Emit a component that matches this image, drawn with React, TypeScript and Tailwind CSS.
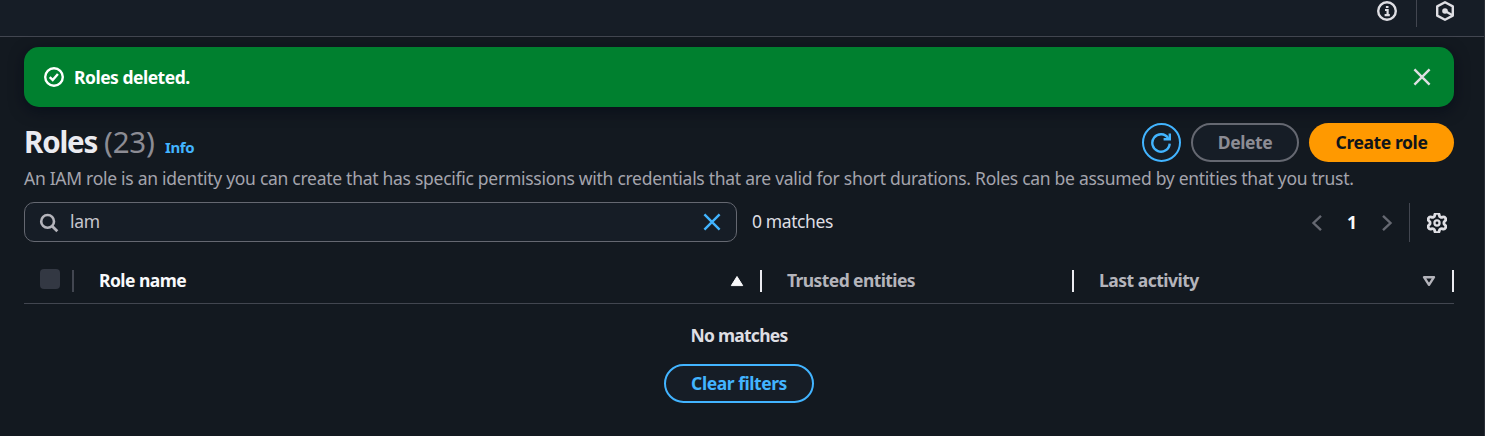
import React from "react";

type IconProps = { children: React.ReactNode; className?: string };

function Icon({ children, className = "" }: IconProps) {
  return (
    <svg viewBox="0 0 20 20" fill="none" stroke="currentColor" strokeWidth="2.4" className={`block h-5 w-5 shrink-0 ${className}`}>
      {children}
    </svg>
  );
}

function TopBar() {
  return (
    <header className="flex h-[37px] items-start justify-end border-b border-[#424650] bg-[#161d26] pr-[29px] text-[#dedee3]">
      <Icon className="mt-[1px]">
        <circle cx="10" cy="10" r="8.8" />
        <path d="M8 9h2.6v5.2M7.6 14.2h5.2M8.9 6h2.6" strokeWidth="2.2" />
      </Icon>
      <span className="ml-[19px] mr-[18px] h-[27px] w-px bg-[#424650]" />
      <Icon className="mt-[1px]">
        <path d="M10 1.3 17.8 5.4v9.2L10 18.7 2.2 14.6V5.4z" strokeLinejoin="round" />
        <circle cx="10" cy="10" r="2.8" fill="currentColor" stroke="none" />
        <path d="M10 10l7.5 4.2" />
      </Icon>
    </header>
  );
}

function Flash() {
  return (
    <div className="mx-6 mr-[30px] mt-[10px] flex h-[60px] items-center rounded-[15px] bg-[#00802f] pl-5 pr-[22px] text-white shadow-[0_4px_14px_1px_rgba(0,7,22,0.5)]">
      <Icon>
        <circle cx="10" cy="10" r="8.8" />
        <path d="M5.7 10.2l3 2.8 5.2-6" />
      </Icon>
      <span className="ml-[10px] text-[17.5px] font-bold leading-[25px] tracking-[-0.5px]">Roles deleted.</span>
      <Icon className="ml-auto text-[#dedee3]">
        <path d="M2.4 2.4l15.2 15.2M17.6 2.4L2.4 17.6" />
      </Icon>
    </div>
  );
}

function Heading() {
  return (
    <div className="mt-4 flex h-[39px] items-center">
      <h1 className="flex items-baseline pt-[3px] text-[29.5px] leading-[38px]">
        <span className="w-[80px] font-bold tracking-[-1.2px] text-[#ebebf0]">Roles</span>
        <span className="w-[61px] tracking-[-0.2px] text-[#8c8c94]">(23)</span>
        <a className="text-[15px] font-bold tracking-[-0.4px] text-[#42b4ff]">Info</a>
      </h1>
      <div className="ml-auto flex gap-[10px] text-[17.5px] font-bold tracking-[-0.4px]">
        <button className="flex h-[39px] w-[39px] items-center justify-center rounded-full border-2 border-[#42b4ff] bg-[#161d26] text-[#42b4ff]">
          <Icon className="mr-px">
            <path d="M18.7 10.6A8.7 8.7 0 1 1 17.2 5.1" />
            <path d="M12.6 6.3h6.2V0.6" />
          </Icon>
        </button>
        <button className="h-[39px] w-[108px] rounded-full border-2 border-[#656871] bg-[#161d26] pb-px text-[#8c8c94]">Delete</button>
        <button className="h-[39px] w-[145px] rounded-full bg-[#ff9900] pb-px text-[#0f141a]">Create role</button>
      </div>
    </div>
  );
}

function Toolbar() {
  return (
    <div className="mt-[10px] flex h-10 items-center">
      <div className="flex h-10 w-[713px] items-center rounded-[10px] border border-[#656871] bg-[#161d26] pl-[14px] pr-[14px] text-[#b4b4bb]">
        <Icon className="mt-px">
          <circle cx="8.6" cy="8.4" r="6.4" strokeWidth="2.6" />
          <path d="M13 13l5.3 5.3" strokeWidth="2.8" />
        </Icon>
        <span className="mb-px ml-[11px] text-[17.5px] font-[450] tracking-[-0.3px] text-[#c6c6cd]">lam</span>
        <Icon className="ml-auto text-[#42b4ff]">
          <path d="M2.4 2.4l15.2 15.2M17.6 2.4L2.4 17.6" />
        </Icon>
      </div>
      <span className="mb-px ml-[15px] text-[17.5px] font-[450] tracking-[-0.4px] text-[#dedee3]">0 matches</span>
      <div className="ml-auto flex h-[39px] items-center text-[#656871]">
        <Icon className="mt-[2px]">
          <path d="M14 2.8L6.5 10l7.5 7.2" />
        </Icon>
        <span className="w-[50px] text-center text-[17.5px] font-bold text-[#f9f9fb]">1</span>
        <Icon className="mt-[2px]">
          <path d="M6 2.8l7.5 7.2L6 17.2" />
        </Icon>
        <span className="ml-[12px] mr-[17px] h-[39px] w-px bg-[#424650]" />
        <svg viewBox="1 1 22 22" fill="none" stroke="currentColor" strokeWidth="2.9" className="mr-[7px] mt-[2px] block h-5 w-5 text-[#dedee3]">
          <path d="M9.671 4.136a2.34 2.34 0 0 1 4.659 0 2.34 2.34 0 0 0 3.319 1.915 2.34 2.34 0 0 1 2.33 4.033 2.34 2.34 0 0 0 0 3.831 2.34 2.34 0 0 1-2.33 4.033 2.34 2.34 0 0 0-3.319 1.915 2.34 2.34 0 0 1-4.659 0 2.34 2.34 0 0 0-3.32-1.915 2.34 2.34 0 0 1-2.33-4.033 2.34 2.34 0 0 0 0-3.831A2.34 2.34 0 0 1 6.35 6.051a2.34 2.34 0 0 0 3.319-1.915" transform="translate(12 12) scale(1.08) translate(-12 -12)" />
          <circle cx="12" cy="12" r="2.8" strokeWidth="2.5" />
        </svg>
      </div>
    </div>
  );
}

function TableHeader() {
  return (
    <div className="mt-4 flex h-[46px] items-center border-b border-[#424650] text-[17.5px] font-bold leading-[25px] text-[#b4b4bb]">
      <span className="mb-[3px] ml-4 h-5 w-5 rounded-[4px] bg-[#333843]" />
      <span className="ml-3 h-[22px] w-[2px] bg-[#424650]" />
      <div className="flex w-[688px] items-center justify-between pl-[25px] pr-[18px] text-[#f9f9fb]">
        <span className="tracking-[-0.55px]">Role name</span>
        <svg viewBox="0 0 14 12" className="h-3 w-[14px]">
          <path d="M7 1.5L12.7 10.6H1.3z" fill="currentColor" stroke="currentColor" strokeWidth="1" strokeLinejoin="round" />
        </svg>
      </div>
      <div className="flex w-[312px] items-center">
        <span className="-ml-[2px] h-[22px] w-[2px] bg-[#ebebf0]" />
        <span className="ml-[25px] tracking-[-0.6px]">Trusted entities</span>
      </div>
      <div className="flex grow items-center">
        <span className="-ml-[2px] h-[22px] w-[2px] bg-[#ebebf0]" />
        <span className="ml-[25px] tracking-[-0.5px]">Last activity</span>
        <svg viewBox="0 0 14 12" className="ml-auto mr-[16px] h-3 w-[14px]">
          <path d="M7 9.8L2 2.2h10z" fill="none" stroke="currentColor" strokeWidth="2.4" strokeLinejoin="round" />
        </svg>
        <span className="h-[22px] w-[2px] bg-[#ebebf0]" />
      </div>
    </div>
  );
}

export default function App() {
  return (
    <div className="h-[436px] w-[1485px] overflow-hidden border-r border-[#2a2e36] bg-[#131920] font-['Noto_Sans',sans-serif]">
      <TopBar />
      <Flash />
      <main className="pl-6 pr-[30px]">
        <Heading />
        <p className="mt-[4px] mb-[11px] whitespace-nowrap text-[17.5px] font-[450] leading-[25px] tracking-[-0.28px] text-[#a4a4ad]">
          An IAM role is an identity you can create that has specific permissions with credentials that are valid for short durations. Roles can be assumed by entities that you trust.
        </p>
        <Toolbar />
        <TableHeader />
        <div className="mt-[19px] flex flex-col items-center text-[17.5px] font-bold leading-[25px] tracking-[-0.45px]">
          <span className="tracking-[-0.75px] text-[#dedee3]">No matches</span>
          <button className="mt-4 h-[39px] w-[150px] rounded-full border-2 border-[#42b4ff] bg-[#161d26] pb-px text-[#42b4ff]">Clear filters</button>
        </div>
      </main>
    </div>
  );
}
